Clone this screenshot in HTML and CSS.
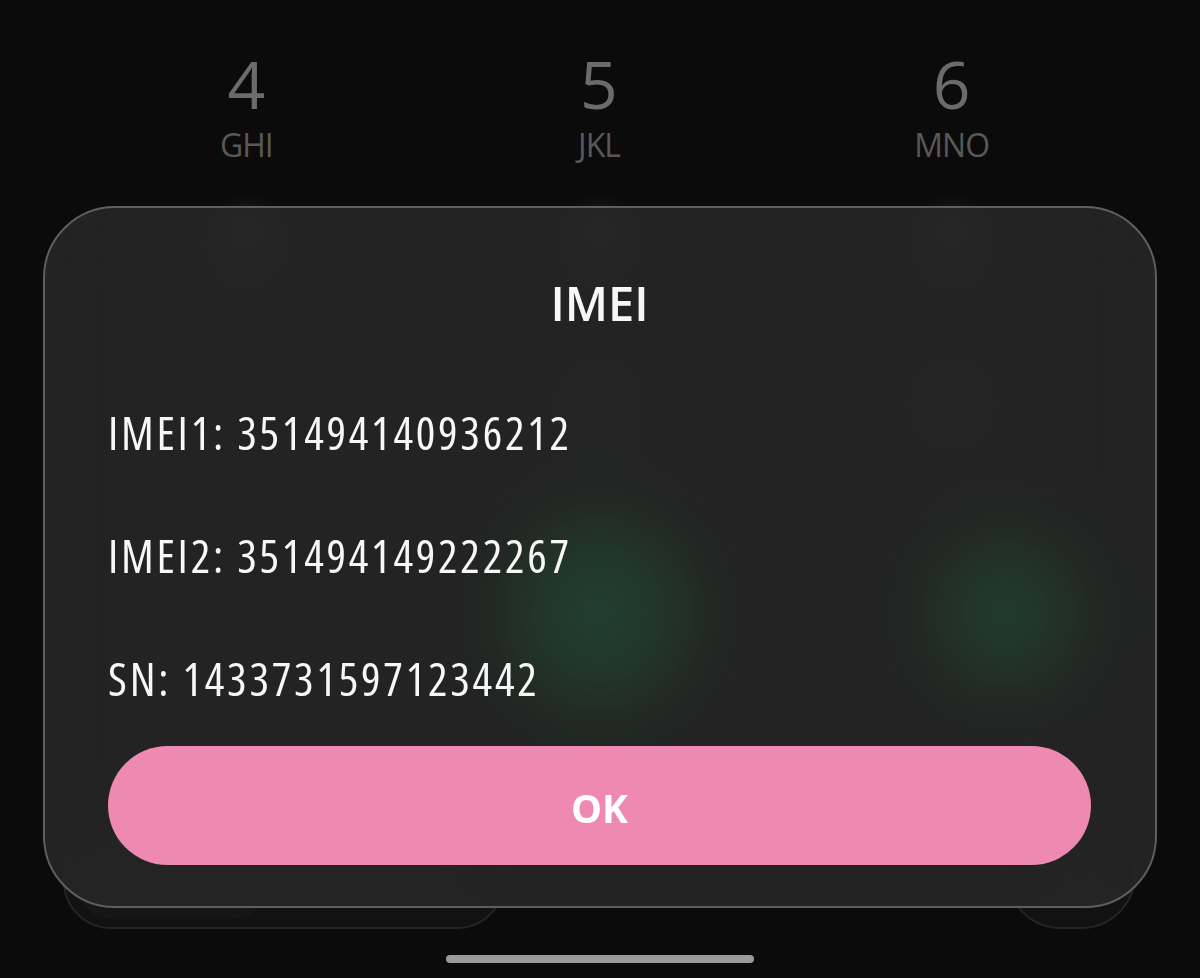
FILE: index.html
```html
<!DOCTYPE html>
<html lang="en">
<head>
<meta charset="utf-8">
<title>IMEI</title>
<link rel="stylesheet" href="styles.css">
</head>
<body>
<div class="screen">
  <div class="keypad">
    <div class="key"><span class="digit">4</span><span class="letters">GHI</span></div>
    <div class="key"><span class="digit">5</span><span class="letters">JKL</span></div>
    <div class="key"><span class="digit">6</span><span class="letters">MNO</span></div>
    <div class="key"><span class="ghost"></span></div>
    <div class="key"><span class="ghost"></span></div>
    <div class="key"><span class="ghost"></span></div>
    <div class="key"><span class="ghost small"></span></div>
    <div class="key"><span class="ghost"></span></div>
    <div class="key"><span class="ghost"></span></div>
  </div>
  <div class="actions">
    <div class="call-btn"></div>
    <div class="video-btn"></div>
  </div>
  <div class="bottom-row">
    <div class="pill-left"><div class="pill-inner"></div></div>
    <div class="pill-right"></div>
  </div>
  <div class="home-indicator"></div>

  <div class="dialog" role="dialog" aria-labelledby="dlg-title">
    <h1 class="dialog-title" id="dlg-title">IMEI</h1>
    <p class="info-line first">IMEI1: 351494140936212</p>
    <p class="info-line">IMEI2: 351494149222267</p>
    <p class="info-line">SN: 1433731597123442</p>
    <button class="ok-btn" type="button">OK</button>
  </div>
</div>
</body>
</html>
```
FILE: styles.css
```css
* { box-sizing: border-box; }
html, body { margin: 0; padding: 0; background: #0b0b0b; }
.screen {
  position: relative;
  width: 1200px;
  height: 978px;
  overflow: hidden;
  background: #0b0b0b;
  font-family: "Open Sans", "Noto Sans", sans-serif;
}
.keypad {
  display: grid;
  grid-template-columns: repeat(3, 1fr);
  padding: 50px 72px 0 70px;
  row-gap: 48px;
}
.key {
  display: flex;
  flex-direction: column;
  align-items: center;
  height: 112px;
}
.digit {
  font-size: 66px;
  line-height: 66px;
  font-weight: 500;
  color: #6b6b6b;
}
.letters {
  margin-top: 13px;
  font-size: 32px;
  line-height: 32px;
  color: #585858;
  letter-spacing: -1px;
}
.ghost {
  width: 44px;
  height: 56px;
  margin-top: 6px;
  border-radius: 50%;
  background: #484848;
  filter: blur(14px);
}
.ghost.small {
  background: #1c1c1c;
}
.actions {
  display: flex;
  align-items: center;
  margin-top: 43px;
  padding-left: 511px;
  height: 176px;
  gap: 250px;
}
.call-btn {
  width: 176px;
  height: 186px;
  border-radius: 50%;
  background: #00a23a;
}
.video-btn {
  width: 136px;
  height: 144px;
  border-radius: 50%;
  background: #00a23a;
}
.bottom-row {
  display: flex;
  margin-top: 118px;
  padding-left: 63px;
  height: 110px;
  gap: 501px;
}
.pill-left {
  width: 442px;
  height: 110px;
  border-radius: 48px;
  background: #121212;
  border: 2px solid #242424;
  padding: 0 0 8px 15px;
  display: flex;
  align-items: flex-end;
}
.pill-inner {
  width: 184px;
  height: 60px;
  border-radius: 30px;
  background: #161616;
}
.pill-right {
  width: 130px;
  height: 110px;
  border-radius: 60px;
  background: #121212;
  border: 2px solid #242424;
}
.home-indicator {
  width: 308px;
  height: 8px;
  margin: 26px auto 0;
  border-radius: 4px;
  background: #9b9b9b;
}
.dialog {
  position: absolute;
  left: 43px;
  top: 206px;
  width: 1114px;
  height: 702px;
  padding: 65px 64px 41px 63px;
  border: 2px solid #5e5e5e;
  border-radius: 72px;
  background: rgba(40, 40, 40, 0.82);
  backdrop-filter: blur(40px);
  -webkit-backdrop-filter: blur(40px);
  display: flex;
  flex-direction: column;
  color: #f7f7f7;
}
.dialog-title {
  margin: 0;
  font-size: 47px;
  line-height: 60px;
  font-weight: 600;
  text-align: center;
}
.info-line {
  margin: 63px 0 0;
  font-size: 46px;
  line-height: 60px;
  font-weight: 400;
  font-stretch: 75%;
  letter-spacing: 2.75px;
}
.info-line.first { margin-top: 69px; }
.ok-btn {
  margin-top: 38px;
  height: 119px;
  width: 100%;
  border: none;
  border-radius: 60px;
  background: #ee8ab1;
  color: #ffffff;
  font-family: "Open Sans", "Noto Sans", sans-serif;
  font-size: 39px;
  line-height: 39px;
  font-weight: 700;
  padding: 4px 0 0;
}
```
